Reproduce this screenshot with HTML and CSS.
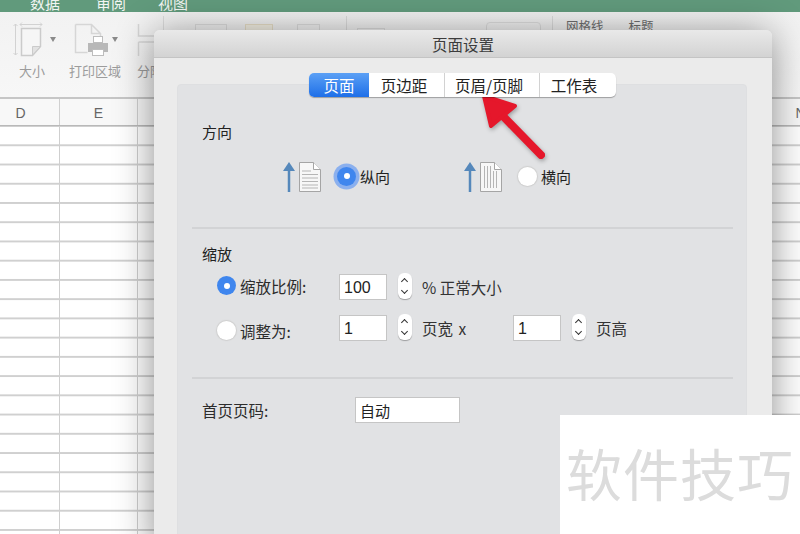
FILE: index.html
```html
<!DOCTYPE html>
<html>

<head>
    <title>页面设置</title>
    <link rel="stylesheet" href="styles.css">
</head>

<body>
    <div class="app">
        <div class="menubar">
            <span>数据</span>
            <span>审阅</span>
            <span class="menu-last">视图</span>
        </div>

        <div class="toolbar">
            <div class="tool tool-size">
                <svg class="tool-icon" width="32" height="36" viewBox="0 0 32 36">
                    <path d="M2.500 2v31M0.500 4l2-2 2 2M0.500 31l2 2 2-2M7 2.500h22M9 0.500l-2 2 2 2M27 0.500l2 2-2 2" fill="none" stroke="#d2d2d2" stroke-width="1"/>
                    <path d="M8.500 6.500h19v18l-8 9h-11z" fill="#f6f6f6" stroke="#cbcbcb" stroke-width="1.500"/>
                    <path d="M19.500 33v-8.500h8z" fill="#e2e2e2" stroke="#cbcbcb"/>
                </svg>
                <span>大小</span>
            </div>
            <span class="caret caret-size"></span>
            <div class="tool tool-print">
                <svg class="tool-icon" width="36" height="36" viewBox="0 0 36 36">
                    <path d="M1.500 2.500h16l9 9v6M17.500 2.500v9h9M1.500 2.500v28h12" fill="none" stroke="#d6d6d6" stroke-width="1.500"/>
                    <rect x="19.500" y="14.500" width="9" height="6" fill="#fff" stroke="#bdbdbd"/>
                    <path d="M14 21h20v9h-4v-3H18v3h-4z" fill="#b8b8b8"/>
                    <rect x="18.500" y="27.500" width="11" height="6" fill="#fff" stroke="#bdbdbd"/>
                </svg>
                <span>打印区域</span>
            </div>
            <span class="caret caret-print"></span>
            <div class="tool tool-break">
                <svg class="tool-icon" width="26" height="36" viewBox="0 0 26 36">
                    <path d="M1.500 2v12h24M1.500 20h24M1.500 20v14" fill="none" stroke="#d6d6d6" stroke-width="1.500"/>
                </svg>
                <span>分隔</span>
            </div>
            <div class="tool-right">
                <span class="group-sep"></span>
                <span class="ghost ghost-table"></span>
                <span class="ghost ghost-yellow"></span>
                <span class="ghost ghost-image"></span>
                <span class="group-sep sep-second"></span>
                <span class="ghost ghost-small"></span>
                <span class="group-box"></span>
                <span class="group-sep sep-third"></span>
                <span class="group-label">网格线</span>
                <span class="group-label">标题</span>
            </div>
        </div>

        <div class="sheet">
            <div class="col-header">
                <span>D</span><span>E</span><span>F</span><span>G</span><span>H</span><span>I</span><span>J</span><span>K</span><span>L</span><span>M</span><span>N</span>
            </div>
            <div class="grid"></div>
        </div>
    </div>

    <div class="dialog">
        <div class="dialog-title">页面设置</div>

        <div class="tabs">
            <span class="tab tab-active">页面</span>
            <span class="tab tab-margin">页边距</span>
            <span class="tab tab-header">页眉/页脚</span>
            <span class="tab tab-sheet">工作表</span>
        </div>

        <div class="panel">
            <section class="section-orient">
                <h4>方向</h4>
                <div class="orient-row">
                    <div class="orient orient-first">
                        <svg width="40" height="30" viewBox="0 0 40 30">
                            <path d="M6 30V8" stroke="#5588bb" stroke-width="2.500"/>
                            <path d="M6 0l6 9H0z" fill="#5588bb"/>
                            <path d="M16.500 0.500h14l7 7v22h-21z" fill="#f7f7f7" stroke="#a5a5a5"/>
                            <path d="M30.500 0.500v7h7" fill="#fff" stroke="#a5a5a5"/>
                            <path d="M19 9h9M19 12.500h16M19 16h16M19 19.500h16M19 23h16M19 26h16" stroke="#b5b5b5"/>
                        </svg>
                        <span class="radio radio-on radio-focus"></span>
                        <span class="radio-label">纵向</span>
                    </div>
                    <div class="orient">
                        <svg width="40" height="30" viewBox="0 0 40 30">
                            <path d="M6 30V8" stroke="#5588bb" stroke-width="2.500"/>
                            <path d="M6 0l6 9H0z" fill="#5588bb"/>
                            <path d="M16.500 0.500h14l7 7v22h-21z" fill="#f7f7f7" stroke="#a5a5a5"/>
                            <path d="M30.500 0.500v7h7" fill="#fff" stroke="#a5a5a5"/>
                            <path d="M20.500 4v22M23.500 4v22M26.500 4v22M29.500 9v17M32.500 9v17" stroke="#b5b5b5"/>
                        </svg>
                        <span class="radio"></span>
                        <span class="radio-label">横向</span>
                    </div>
                </div>
            </section>

            <section class="section-scale">
                <h4>缩放</h4>
                <div class="scale-row scale-first">
                    <span class="radio radio-on"></span>
                    <span class="scale-label">缩放比例:</span>
                    <span class="field field-num">100</span>
                    <span class="stepper"><i class="up"></i><i class="down"></i></span>
                    <span class="unit">% 正常大小</span>
                </div>
                <div class="scale-row scale-second">
                    <span class="radio"></span>
                    <span class="scale-label">调整为:</span>
                    <span class="field field-num">1</span>
                    <span class="stepper"><i class="up"></i><i class="down"></i></span>
                    <span class="unit unit-wide">页宽 x</span>
                    <span class="field field-num">1</span>
                    <span class="stepper"><i class="up"></i><i class="down"></i></span>
                    <span class="unit">页高</span>
                </div>
            </section>

            <section class="section-first">
                <span class="first-label">首页页码:</span>
                <span class="field field-first">自动</span>
            </section>
        </div>
    </div>

    <svg class="arrow" width="80" height="80" viewBox="476 88 80 80">
        <path d="M498 111L541 155" stroke="#e5172b" stroke-width="8" stroke-linecap="round"/>
        <path d="M484 96L515 106L491 126z" fill="#e5172b" stroke="#e5172b" stroke-width="4" stroke-linejoin="round"/>
    </svg>

    <div class="watermark">软件技巧</div>
</body>

</html>
```

FILE: styles.css
```css
html,
body {
    margin: 0;
    height: 534px;
    overflow: hidden;
}

body {
    position: relative;
    width: 800px;
    background-color: white;
    font-family: "Noto Sans CJK SC", "Liberation Sans", sans-serif;
    color: #222;
}

.menubar {
    height: 12px;
    background-color: #619a7c;
    display: flex;
    gap: 36px;
    padding-left: 30px;
    color: #f1f5f2;
    font-size: 15px;
    line-height: 6px;
    overflow: hidden;
}

.menu-last {
    margin-left: -4px;
}

.toolbar {
    height: 85px;
    display: flex;
    background: linear-gradient(#f2f2f2, #f7f7f7);
    border-bottom: 2px solid #c6c6c6;
    color: #9c9c9c;
    font-size: 13px;
}

.tool {
    display: flex;
    flex-direction: column;
    align-items: center;
    padding-top: 10px;
}

.tool-icon {
    flex: none;
    margin-bottom: 4px;
    margin-right: 6px;
}

.tool span {
    line-height: 18px;
    white-space: nowrap;
}

.tool-size {
    width: 26px;
    margin-left: 19px;
}

.tool-print {
    width: 52px;
    margin-left: 13px;
}

.tool-break {
    width: 26px;
    margin-left: 16px;
}

.tool-break .tool-icon {
    margin-right: 0;
}

.caret {
    width: 0;
    height: 0;
    margin-top: 25px;
    border-left: 3px solid transparent;
    border-right: 3px solid transparent;
    border-top: 5px solid #8a8a8a;
}

.caret-size {
    margin-left: 5px;
}

.caret-print {
    margin-left: -9px;
    margin-right: 3px;
}

.tool-right {
    display: flex;
    align-items: flex-start;
}

.group-sep {
    width: 1px;
    height: 40px;
    margin-top: 4px;
    background-color: #dcdcdc;
}

.ghost {
    height: 24px;
    margin-top: 12px;
    box-sizing: border-box;
    border: 1px solid #dedede;
}

.ghost-table {
    width: 32px;
    margin-left: 31px;
}

.ghost-yellow {
    width: 28px;
    margin-left: 18px;
    border-color: #e8dfc8;
    background-color: #f6f2e6;
}

.ghost-image {
    width: 23px;
    margin-left: 24px;
}

.sep-second {
    margin-left: 26px;
}

.ghost-small {
    width: 28px;
    margin-left: 10px;
    margin-top: 16px;
}

.group-box {
    width: 55px;
    height: 24px;
    box-sizing: border-box;
    margin: 10px 0 0 101px;
    border: 1px solid #dedede;
    border-radius: 4px;
}

.sep-third {
    margin-left: 11px;
}

.group-label {
    margin-top: 5px;
    margin-left: 13px;
    font-size: 12.500px;
    line-height: 18px;
    color: #6e6e6e;
}

.group-label + .group-label {
    margin-left: 25px;
}

.col-header {
    display: flex;
    height: 27px;
    margin-left: -18px;
    border-bottom: 1px solid #b9b9b9;
    box-sizing: border-box;
    background-color: #f8f8f8;
}

.col-header span {
    flex: 0 0 78px;
    box-sizing: border-box;
    border-right: 1px solid #d0d0d0;
    text-align: center;
    font-family: "Liberation Sans", sans-serif;
    font-size: 14px;
    line-height: 28px;
    color: #666;
}

.grid {
    height: 408px;
    background-image:
        linear-gradient(to top, #d0d0d0 1.500px, transparent 1.500px),
        linear-gradient(to left, #cfcfcf 1px, transparent 1px);
    background-size: 100% 19.240px, 78px 100%;
    background-position: 0 1px, -18px 0;
}

.dialog {
    position: absolute;
    left: 154px;
    top: 30px;
    width: 618px;
    height: 520px;
    box-sizing: border-box;
    background-color: #ebebeb;
    border-radius: 6px 6px 0 0;
    box-shadow: 0 4px 38px rgba(0, 0, 0, 0.45);
}

.dialog-title {
    height: 28px;
    box-sizing: border-box;
    border-bottom: 1px solid #c4c4c4;
    border-radius: 6px 6px 0 0;
    background: linear-gradient(#e9e9e9, #d3d3d3);
    text-align: center;
    font-size: 15.500px;
    line-height: 29px;
    color: #3c3c3c;
}

.tabs {
    position: absolute;
    left: 155px;
    top: 43px;
    display: flex;
    height: 24px;
    border-radius: 5px;
    background-color: white;
    box-shadow: 0 1px 1px rgba(0, 0, 0, 0.3);
    z-index: 1;
}

.tab {
    box-sizing: border-box;
    text-align: center;
    font-size: 15.500px;
    line-height: 24px;
    border-right: 1px solid #d2d2d2;
    color: #222;
}

.tab-active {
    width: 60px;
    background: linear-gradient(#5ba0f5, #1e6fe8);
    color: white;
    border-right: none;
    border-radius: 5px 0 0 5px;
}

.tab-margin {
    width: 76px;
    padding-right: 5px;
}

.tab-header {
    width: 95px;
    padding-right: 6px;
}

.tab-sheet {
    width: 76px;
    padding-right: 8px;
    border-right: none;
}

.panel {
    margin: 26px 25px 0 23px;
    height: 460px;
    box-sizing: border-box;
    padding: 0 13px 0 14px;
    background-color: #e1e2e4;
    border: 1px solid #dedfe1;
    border-radius: 4px;
}

section {
    border-bottom: 2px solid #d2d3d5;
}

h4 {
    margin: 0;
    padding-left: 10px;
    font-size: 15px;
    font-weight: normal;
    line-height: 22px;
    color: #222;
}

.section-orient {
    height: 144px;
    box-sizing: border-box;
    padding-top: 36px;
}

.orient-row {
    display: flex;
    margin-top: 19px;
    margin-left: 91px;
}

.orient {
    display: flex;
    align-items: center;
    height: 28px;
}

.orient-first {
    width: 181px;
}

.orient svg {
    flex: none;
    align-self: flex-start;
    margin-right: 14px;
}

.radio {
    flex: none;
    box-sizing: border-box;
    width: 19px;
    height: 19px;
    border-radius: 50%;
    background-color: white;
    box-shadow: 0 0 1px 1px #cfcfcf;
    display: flex;
    align-items: center;
    justify-content: center;
}

.radio-on {
    background-color: #3f86ee;
    box-shadow: none;
}

.radio-on::after {
    content: "";
    width: 6px;
    height: 6px;
    border-radius: 50%;
    background-color: white;
}

.radio-focus {
    box-shadow: 0 0 0 3.500px #8bb0ee;
}

.radio-label {
    margin-left: 4px;
    margin-top: 2px;
    font-size: 15px;
    line-height: 20px;
}

.section-scale {
    height: 150px;
    box-sizing: border-box;
    padding-top: 14px;
}

.scale-row {
    display: flex;
    align-items: center;
    height: 30px;
    margin-top: 11px;
    padding-left: 25px;
    font-size: 15.500px;
}

.scale-first {
    margin-top: 7px;
}

.scale-first .radio,
.scale-first .scale-label {
    margin-bottom: 3px;
}

.scale-second .radio,
.scale-second .scale-label {
    margin-top: 5px;
}

.scale-label {
    width: 99px;
    margin-left: 4px;
    color: #2c2c2c;
}

.field {
    box-sizing: border-box;
    background-color: white;
    border: 1px solid #c5c5c5;
    height: 26px;
    font-size: 15px;
    line-height: 26px;
    padding-left: 4px;
}

.field-num {
    width: 48px;
    font-family: "Liberation Sans", sans-serif;
    font-size: 16px;
}

.stepper {
    position: relative;
    flex: none;
    width: 14px;
    height: 26px;
    margin: -2px 10px 0 11px;
    border-radius: 6px;
    background-color: white;
    box-shadow: 0 1px 1px rgba(0, 0, 0, 0.3);
}

.stepper i {
    position: absolute;
    left: 4px;
    width: 4px;
    height: 4px;
    border: solid #333;
    border-width: 1px 0 0 1px;
    transform: rotate(45deg);
}

.stepper .up {
    top: 6px;
}

.stepper .down {
    bottom: 6px;
    transform: rotate(225deg);
}

.unit {
    color: #333;
}

.unit-wide {
    width: 91px;
    word-spacing: 2px;
}

.section-first {
    display: flex;
    align-items: center;
    border: none;
    padding: 18px 0 0 10px;
    font-size: 15.500px;
}

.first-label {
    width: 153px;
    color: #2c2c2c;
}

.field-first {
    width: 105px;
    padding-left: 4px;
}

.arrow {
    position: absolute;
    left: 476px;
    top: 88px;
    filter: drop-shadow(1px 2px 2px rgba(0, 0, 0, 0.3));
}

.watermark {
    position: absolute;
    left: 560px;
    top: 415px;
    width: 240px;
    height: 119px;
    box-sizing: border-box;
    padding-left: 6px;
    background-color: white;
    font-size: 56px;
    line-height: 114px;
    letter-spacing: 1px;
    color: #dcdcdc;
    white-space: nowrap;
}
```
